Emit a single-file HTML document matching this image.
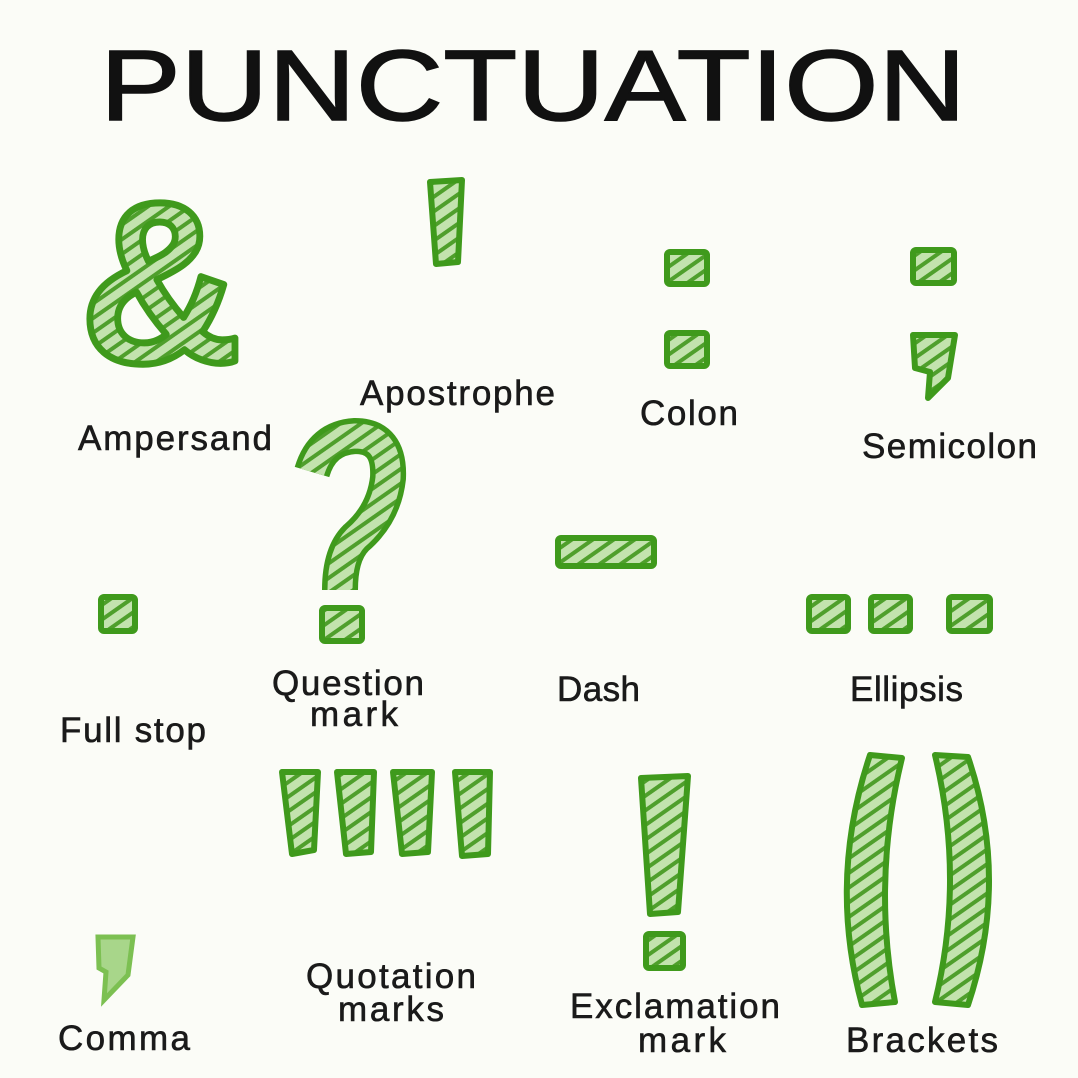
<!DOCTYPE html>
<html><head><meta charset="utf-8"><style>
html,body{margin:0;padding:0;background:#fbfcf7;}
svg{display:block}
text.l{font-family:"Liberation Sans",sans-serif;font-size:35px;fill:#1a1a1a;stroke:#1a1a1a;stroke-width:0.6;}
</style></head><body>
<svg width="1078" height="1078" viewBox="0 0 1078 1078" xmlns="http://www.w3.org/2000/svg">
<defs>
<pattern id="h" width="12" height="12" patternUnits="userSpaceOnUse" patternTransform="rotate(-35)">
<rect width="12" height="12" fill="#c3e3ae"/>
<rect width="12" height="4" fill="#4f9f2c"/>
</pattern>
</defs>
<rect width="1078" height="1078" fill="#fbfcf7"/>
<text x="100" y="120" font-family="Liberation Sans,sans-serif" font-size="100" fill="#111" stroke="#111" stroke-width="1.5" textLength="866" lengthAdjust="spacingAndGlyphs">PUNCTUATION</text>
<path d="M312 472 Q322 438 355 436 Q390 436 388 478 Q384 514 356 538 Q340 554 340 590" fill="none" stroke="#3f9a1c" stroke-width="36"/>
<path d="M312 472 Q322 438 355 436 Q390 436 388 478 Q384 514 356 538 Q340 554 340 590" fill="none" stroke="url(#h)" stroke-width="25"/>
<g fill="url(#h)" stroke="#3f9a1c" stroke-width="6" stroke-linejoin="round">
<text x="80" y="362" font-family="Liberation Sans,sans-serif" font-weight="bold" font-size="230" stroke-width="7" textLength="162" lengthAdjust="spacingAndGlyphs">&amp;</text>
<path d="M430 182 L462 180 L458 262 L436 264 Z"/>
<rect x="667" y="252" width="40" height="32" rx="3"/>
<rect x="667" y="333" width="40" height="33" rx="3"/>
<rect x="913" y="250" width="41" height="33" rx="3"/>
<path d="M913 335 L955 335 L948 378 L928 398 L930 372 L915 368 Z"/>
<rect x="322" y="608" width="40" height="33" rx="3"/>
<rect x="101" y="597" width="34" height="34" rx="3"/>
<rect x="558" y="538" width="96" height="28" rx="3"/>
<rect x="809" y="597" width="39" height="34" rx="3"/>
<rect x="871" y="597" width="39" height="34" rx="3"/>
<rect x="949" y="597" width="41" height="34" rx="3"/>
<path d="M282 772 L318 772 L314 850 L292 854 Z"/>
<path d="M337 772 L374 772 L371 852 L346 854 Z"/>
<path d="M393 772 L432 772 L428 852 L402 854 Z"/>
<path d="M455 772 L490 772 L488 854 L462 856 Z"/>
<path d="M641 778 L688 776 L678 912 L650 914 Z"/>
<rect x="646" y="934" width="37" height="34" rx="3"/>
<path d="M870 755 L902 758 Q872 880 895 1002 L862 1005 Q828 880 870 755 Z"/>
<path d="M935 755 L968 757 Q1010 880 968 1005 L935 1002 Q965 880 935 755 Z"/>
</g>
<path d="M98 937 L133 937 L128 975 L104 1000 L106 972 L99 968 Z" fill="#a8d68a" stroke="#7cc052" stroke-width="5"/>
<text class="l" x="78" y="450" textLength="194">Ampersand</text>
<text class="l" x="360" y="405" textLength="195">Apostrophe</text>
<text class="l" x="640" y="425" textLength="98">Colon</text>
<text class="l" x="862" y="458" textLength="175">Semicolon</text>
<text class="l" x="272" y="695" textLength="152">Question</text>
<text class="l" x="310" y="726" textLength="88">mark</text>
<text class="l" x="557" y="701" textLength="83">Dash</text>
<text class="l" x="850" y="701" textLength="113">Ellipsis</text>
<text class="l" x="60" y="742" textLength="146">Full stop</text>
<text class="l" x="58" y="1050" textLength="132">Comma</text>
<text class="l" x="306" y="988" textLength="170">Quotation</text>
<text class="l" x="338" y="1021" textLength="106">marks</text>
<text class="l" x="570" y="1018" textLength="210">Exclamation</text>
<text class="l" x="638" y="1052" textLength="88">mark</text>
<text class="l" x="846" y="1052" textLength="152">Brackets</text>
</svg>
</body></html>
